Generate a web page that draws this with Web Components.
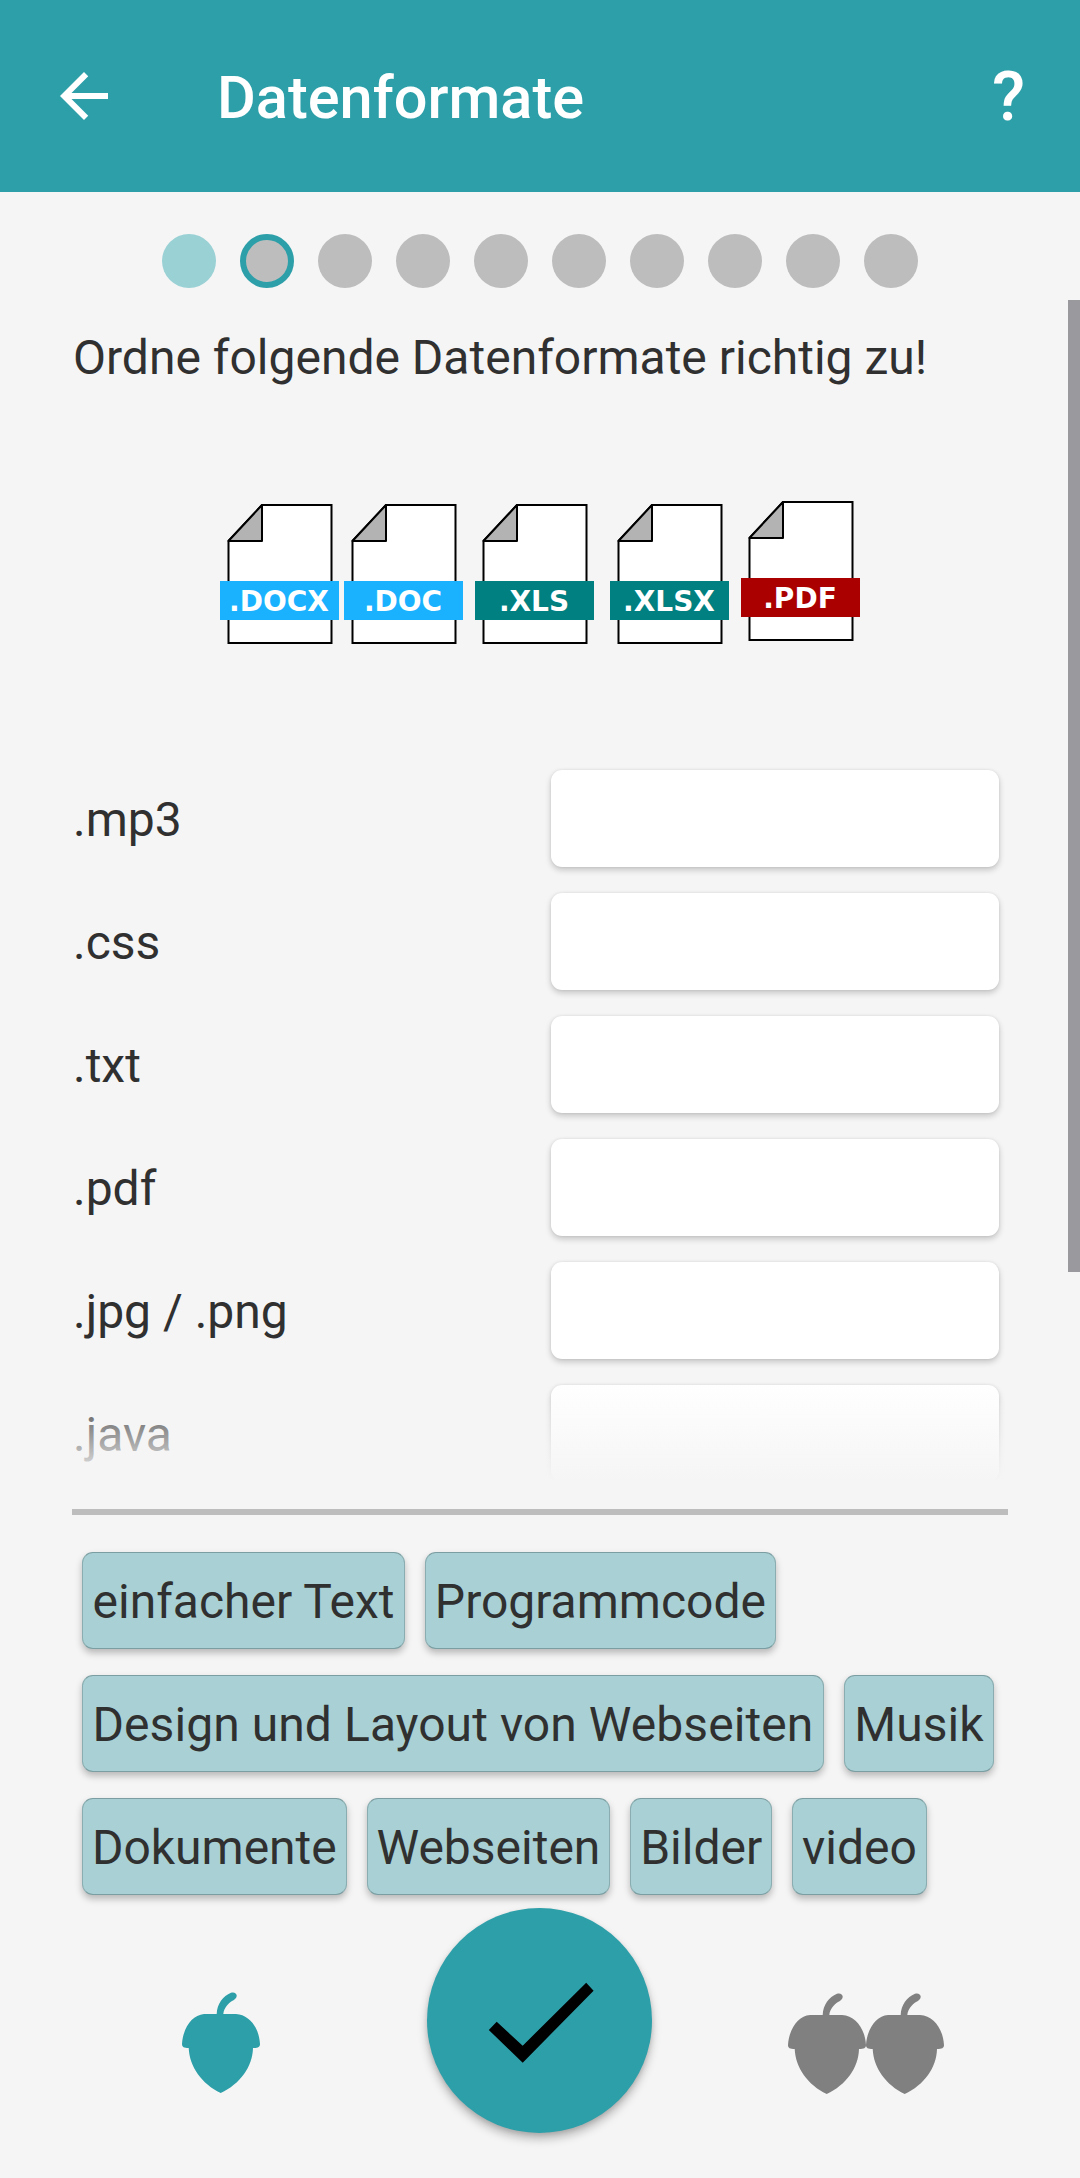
<!DOCTYPE html>
<html lang="de"><head><meta charset="utf-8"><title>Datenformate</title>
<style>html,body{margin:0;padding:0;background:#f5f5f5;font-family:Roboto,"Noto Sans",sans-serif;color:#303030}</style>
</head><body>
<quiz-app></quiz-app>
<script>
function def(name, html){
  customElements.define(name, class extends HTMLElement{
    constructor(){super();this.attachShadow({mode:'open'}).innerHTML=typeof html==='function'?html(this):html;}
  });
}
def('app-header',`<style>
:host{display:flex;align-items:center;height:192px;background:#2d9fa9;color:#fff;font-family:Roboto,sans-serif;position:relative;flex:none}
svg{width:72px;height:72px;margin-left:48px;flex:none;fill:#fff}
.t{font-size:59.500px;font-weight:500;margin-left:97px;padding-top:3px;flex:1;white-space:nowrap}
.q{font-size:68px;font-weight:500;margin-right:55px;line-height:72px;padding-top:2px}
</style>
<svg viewBox="0 0 24 24"><path d="M20 11H7.83l5.59-5.59L12 4l-8 8 8 8 1.41-1.41L7.83 13H20v-2z"/></svg>
<span class="t">Datenformate</span><span class="q">?</span>`);

def('step-dots',`<style>
:host{display:flex;justify-content:flex-start;gap:24px;padding:42px 0 0 162px;flex:none;height:54px}
i{display:block;width:54px;height:54px;border-radius:50%;background:#bdbdbd;box-sizing:border-box}
i.done{background:#9ad1d5}
i.cur{border:6px solid #2d9fa9}
</style><i class="done"></i><i class="cur"></i><i></i><i></i><i></i><i></i><i></i><i></i><i></i><i></i>`);

def('file-icon',el=>{
  const c=el.getAttribute('color'), l=el.getAttribute('label');
  return `<style>:host{display:block;width:119px;height:140px;flex:none}svg{display:block}</style>
<svg width="119" height="140" viewBox="0 0 119 140">
<path d="M42 1H111.500V139H8.500V37Z" fill="#fff" stroke="#000" stroke-width="2"/>
<path d="M42 1V37H8.500Z" fill="#b3b3b3" stroke="#000" stroke-width="2" stroke-linejoin="round"/>
<rect x="0" y="77" width="119" height="39" fill="${c}"/>
<text x="59" y="106.500" text-anchor="middle" fill="#fff" font-family="DejaVu Sans,sans-serif" font-weight="700" font-size="28">${l}</text>
</svg>`;});

def('match-row',el=>`<style>
:host{display:flex;align-items:center;height:97px;flex:none}
.l{width:478px;font-size:48px;flex:none;white-space:nowrap;padding-top:2px}
.b{width:448px;height:97px;background:#fff;border-radius:11px;box-shadow:0 3px 6px rgba(0,0,0,.2),0 0 3px rgba(0,0,0,.08);flex:none}
</style><span class="l">${el.getAttribute('label')}</span><div class="b"></div>`);

def('answer-chip',`<style>
:host{display:flex;align-items:center;height:97px;box-sizing:border-box;padding:2px 9.500px 0;background:#a9d1d5;border:1px solid #8aadb1;border-top-color:#7b9ea2;border-bottom-color:#7b9ea2;border-radius:11px;font-size:48px;color:#303030;white-space:nowrap;box-shadow:0 4px 7px rgba(0,0,0,.25)}
</style><slot></slot>`);

const acorn='M34.700 22C35 12 41 4 49 .8C52-.5 55 1.500 54.700 4C54.500 6.500 52 8 50 9C46 11.500 42 16 41.300 22H54C68 23 77 36 78 52C78 55 76 56 71 56C70.500 75 58 92 38.700 101C20 92 7.500 75 6.700 56C2 56 0 55 0 52C1 36 10 23 22 22Z';
def('acorn-icon',el=>`<style>:host{display:block;width:78px;height:101px;flex:none}svg{display:block;fill:${el.getAttribute('color')}}</style>
<svg width="78" height="101" viewBox="0 0 78 101"><path d="${acorn}"/></svg>`);

def('check-fab',`<style>
:host{display:block;width:225px;height:225px;border-radius:50%;background:#2d9fa9;box-shadow:0 6px 10px rgba(0,0,0,.25),0 2px 4px rgba(0,0,0,.1);flex:none}
svg{display:block}
</style><svg width="225" height="225" viewBox="0 0 225 225"><path d="M69.700 113.700L61.800 122L95.700 154.700L166.600 82.700L159.200 74.700L95.700 137.700Z"/></svg>`);

def('quiz-app',`<style>
:host{display:flex;flex-direction:column;height:2178px;width:1080px;overflow:hidden;position:relative;background:#f5f5f5;font-family:Roboto,sans-serif;color:#303030}
.scroll{height:1174px;flex:none;margin-top:20px;position:relative;overflow:hidden;padding:22px 0 0 73px;box-sizing:border-box}
.prompt{font-size:48px;line-height:56px;margin:0;white-space:nowrap}
.files{display:flex;margin:118px 0 0 147px;align-items:flex-start}
.files file-icon:last-child{margin-top:-3px}
.rows{display:flex;flex-direction:column;gap:26px;margin-top:126px;width:930px}
.fade{position:absolute;left:0;right:0;bottom:0;height:100px;background:linear-gradient(rgba(245,245,245,0),#f5f5f5)}
.bar{position:absolute;right:0;top:300px;width:12px;height:972px;background:#9a999e}
hr{border:0;height:6px;background:#bdbdbd;margin:27px 72px 0;flex:none}
.chips{display:flex;flex-wrap:wrap;gap:26px 20px;margin:37px 72px 0 82px;flex:none;align-content:flex-start}
.chips .tight{padding-left:8.900px;padding-right:8.900px}
.foot{display:flex;align-items:flex-start;padding:13px 0 0 182px;flex:none}
check-fab{margin-left:167px}
.one{margin-top:84px}
.two{display:flex;margin:85px 0 0 136px}
</style>
<app-header></app-header>
<step-dots></step-dots>
<div class="scroll">
<p class="prompt">Ordne folgende Datenformate richtig zu!</p>
<div class="files">
<file-icon color="#1ab2ff" label=".DOCX"></file-icon>
<file-icon color="#1ab2ff" label=".DOC" style="margin-left:5px"></file-icon>
<file-icon color="#008080" label=".XLS" style="margin-left:12px"></file-icon>
<file-icon color="#008080" label=".XLSX" style="margin-left:16px"></file-icon>
<file-icon color="#aa0000" label=".PDF" style="margin-left:12px"></file-icon>
</div>
<div class="rows">
<match-row label=".mp3"></match-row>
<match-row label=".css"></match-row>
<match-row label=".txt"></match-row>
<match-row label=".pdf"></match-row>
<match-row label=".jpg / .png"></match-row>
<match-row label=".java"></match-row>
</div>
<div class="fade"></div>
</div>
<hr>
<div class="chips">
<answer-chip>einfacher Text</answer-chip>
<answer-chip class="tight">Programmcode</answer-chip>
<answer-chip style="letter-spacing:.07px">Design und Layout von Webseiten</answer-chip>
<answer-chip>Musik</answer-chip>
<answer-chip class="tight">Dokumente</answer-chip>
<answer-chip class="tight">Webseiten</answer-chip>
<answer-chip class="tight">Bilder</answer-chip>
<answer-chip class="tight">video</answer-chip>
</div>
<div class="foot">
<acorn-icon class="one" color="#2d9fa9"></acorn-icon>
<check-fab></check-fab>
<div class="two"><acorn-icon color="#808080"></acorn-icon><acorn-icon color="#808080"></acorn-icon></div>
</div>
<div class="bar"></div>`);
</script>
</body></html>
